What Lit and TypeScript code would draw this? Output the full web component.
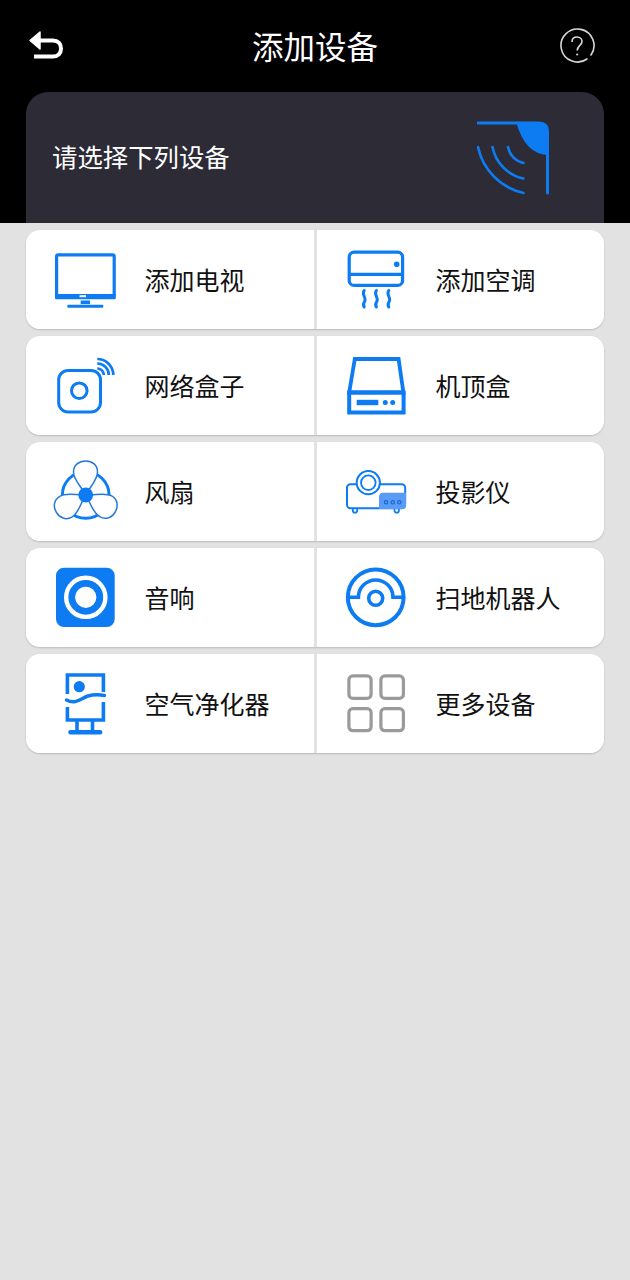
import { LitElement, html, svg, css } from "lit";
import { customElement } from "lit/decorators.js";

const B = "#0d7cf2";

const svgIcon = (body: unknown) => html`<svg class="icon" viewBox="0 0 70 70" fill="none" stroke="none">${body}</svg>`;

const blade = "M35.7 38C31 29 23.5 23 23.5 15C23.5 8 29 4 35.7 4C42.4 4 47.5 8 47.5 15C47.5 23 40.5 29 35.7 38Z";

const icons: Record<string, unknown> = {
  tv: svgIcon(svg`
    <rect x="6.6" y="9.9" width="57.6" height="42.5" rx="1.5" stroke=${B} stroke-width="3.2"/>
    <rect x="5" y="49" width="60.7" height="5.2" rx="1" fill=${B}/>
    <rect x="29.5" y="50.2" width="6.5" height="2" fill="#fff"/>
    <rect x="30.7" y="55.5" width="9.3" height="3.6" fill=${B}/>
    <rect x="17.3" y="59.8" width="36" height="3" rx="1" fill=${B}/>`),
  ac: svgIcon(svg`
    <rect x="8.2" y="7.2" width="53.4" height="33.2" rx="5" stroke=${B} stroke-width="3.2"/>
    <path d="M8 29.3H61.7" stroke=${B} stroke-width="3.2"/>
    <circle cx="55.7" cy="19.3" r="2.8" fill=${B}/>
    <g stroke=${B} stroke-width="3" stroke-linecap="round">
      <path d="M23.2 45.5C20 49.5 26 53 23.6 56.5C22.4 58.5 21.6 60 23.2 62"/>
      <path d="M35.4 45.5C32.2 49.5 38.2 53 35.8 56.5C34.6 58.5 33.8 60 35.4 62"/>
      <path d="M47.8 45.5C44.6 49.5 50.6 53 48.2 56.5C47 58.5 46.2 60 47.8 62"/>
    </g>`),
  box: svgIcon(svg`
    <rect x="8.7" y="19.4" width="41.8" height="41.6" rx="9.5" stroke=${B} stroke-width="3"/>
    <circle cx="29.3" cy="39.7" r="7.8" stroke=${B} stroke-width="3"/>
    <g stroke=${B} stroke-width="2.7">
      <path d="M47.3 17.5A6.5 6.5 0 0 1 53.8 24"/>
      <path d="M47.3 12.5A11.5 11.5 0 0 1 58.8 24"/>
      <path d="M47.3 8A16 16 0 0 1 63.3 24"/>
    </g>`),
  stb: svgIcon(svg`
    <path d="M13.8 8H57.6L62.4 41.5H8.2Z" stroke=${B} stroke-width="3.8" stroke-linejoin="miter"/>
    <rect x="8.2" y="41.5" width="54.4" height="20" stroke=${B} stroke-width="4"/>
    <rect x="15.7" y="48.8" width="21.6" height="5.4" fill=${B}/>
    <circle cx="44.3" cy="51.4" r="2.5" fill=${B}/>
    <circle cx="51.7" cy="51.4" r="2.5" fill=${B}/>`),
  fan: svgIcon(svg`
    <circle cx="35.7" cy="38" r="23.3" stroke=${B} stroke-width="3"/>
    <g fill="#fff" stroke="#2478d8" stroke-width="1.5">
      <path d=${blade}/>
      <path d=${blade} transform="rotate(120 35.7 38)"/>
      <path d=${blade} transform="rotate(240 35.7 38)"/>
    </g>
    <circle cx="35.7" cy="38" r="7.4" fill=${B}/>`),
  proj: svgIcon(svg`
    <rect x="6" y="27.2" width="58.2" height="24" rx="3.5" stroke=${B} stroke-width="2"/>
    <path d="M38 52V40Q38 35.7 42.3 35.7H65V48.5Q65 52 61.5 52Z" fill="#5b9bf8"/>
    <circle cx="27.3" cy="25.7" r="11.6" fill="#fff" stroke=${B} stroke-width="2"/>
    <circle cx="27.3" cy="25.7" r="7.3" stroke=${B} stroke-width="1.8"/>
    <g stroke="#1668c8" stroke-width="1.1">
      <circle cx="45" cy="45.3" r="1.7"/><circle cx="51.7" cy="45.3" r="1.7"/><circle cx="58.3" cy="45.3" r="1.7"/>
    </g>
    <g stroke=${B} stroke-width="1.8">
      <path d="M11.8 52V53.5A2.2 2.2 0 0 0 16.2 53.5V52"/>
      <path d="M53.5 52V53.5A2.2 2.2 0 0 0 57.9 53.5V52"/>
    </g>`),
  speaker: svgIcon(svg`
    <rect x="6" y="4.7" width="58.7" height="59.3" rx="8" fill=${B}/>
    <circle cx="35.8" cy="34.3" r="19.6" stroke="#fff" stroke-width="4.4"/>
    <circle cx="35.8" cy="34.3" r="10.6" fill="#fff"/>`),
  robot: svgIcon(svg`
    <circle cx="34.7" cy="34.3" r="27.9" stroke=${B} stroke-width="4"/>
    <path d="M7 34.3H17.4A17.3 17.3 0 0 1 52 34.3H62.4" stroke=${B} stroke-width="3.6"/>
    <circle cx="34.7" cy="35.3" r="7" stroke=${B} stroke-width="3.6"/>`),
  air: svgIcon(svg`
    <g stroke=${B} stroke-width="3.6">
      <path d="M17.4 25V6H53.4V23"/>
      <path d="M53.4 33V51H17.4V38"/>
      <path d="M27 51V62M42.5 51V62"/>
    </g>
    <circle cx="29.3" cy="17.7" r="5.6" fill=${B}/>
    <path d="M16.5 31C26 36 31 29 38 27C44 25.3 49 25.5 54.5 26.5" stroke=${B} stroke-width="3.4" stroke-linecap="round"/>
    <rect x="18.3" y="61" width="34" height="4.6" rx="2" fill=${B}/>`),
  more: svgIcon(svg`
    <g stroke="#9a9a9a" stroke-width="3.2">
      <rect x="7.9" y="6.9" width="22.2" height="22.5" rx="4"/>
      <rect x="39.9" y="6.9" width="22.5" height="22.5" rx="4"/>
      <rect x="7.9" y="39.6" width="22.2" height="22.1" rx="4"/>
      <rect x="39.9" y="39.6" width="22.5" height="22.1" rx="4"/>
    </g>`),
};

const rows: [string, string, string, string][] = [
  ["tv", "添加电视", "ac", "添加空调"],
  ["box", "网络盒子", "stb", "机顶盒"],
  ["fan", "风扇", "proj", "投影仪"],
  ["speaker", "音响", "robot", "扫地机器人"],
  ["air", "空气净化器", "more", "更多设备"],
];

@customElement("app-root")
export class AppRoot extends LitElement {
  static styles = css`
    :host {
      display: block;
      width: 630px;
      height: 1280px;
      background: #e2e2e2;
      font-family: "Noto Sans CJK SC", "Liberation Sans", sans-serif;
      overflow: hidden;
    }
    .top {
      background: #000;
      height: 223px;
      padding: 0 26px;
      box-sizing: border-box;
      display: flex;
      flex-direction: column;
    }
    .nav {
      height: 92px;
      flex: none;
      display: grid;
      grid-template-columns: 1fr auto 1fr;
      align-items: center;
      color: #fff;
    }
    .back { width: 40px; height: 34px; display: block; margin-left: 1px; }
    .title { font-size: 31.5px; line-height: 46px; margin-bottom: 2px; }
    .help { justify-self: end; width: 36px; height: 36px; display: block; margin-right: 9px; }
    .banner {
      flex: 1;
      background: #2c2b36;
      border-radius: 22px 22px 0 0;
      display: flex;
      align-items: center;
      justify-content: space-between;
      padding: 0 51px 0 27px;
      color: #fff;
      font-size: 25.4px;
    }
    .banner span { margin: 0 0 4px -1px; }
    .emit { width: 76px; height: 78px; display: block; margin-bottom: 4px; }
    .list {
      padding: 7px 26px 0;
      display: flex;
      flex-direction: column;
      gap: 7px;
    }
    .row {
      height: 99px;
      border-radius: 14px;
      overflow: hidden;
      display: grid;
      grid-template-columns: 288px 1fr;
      column-gap: 3px;
      box-shadow: 0 1px 2px rgba(0, 0, 0, 0.18);
    }
    .cell {
      background: #fff;
      display: flex;
      align-items: center;
      gap: 25px;
      padding-left: 24px;
      font-size: 25px;
      color: #111;
    }
    .cell span { margin: 0 0 2px -0.6px; }
    .icon { width: 70px; height: 70px; display: block; flex: none; }
  `;

  render() {
    return html`
      <div class="top">
        <div class="nav">
          <svg class="back" viewBox="0 0 40 34" fill="none">
            <path d="M3 11.5L13 3V20Z" fill="#fff" stroke="#fff" stroke-width="1.5" stroke-linejoin="round"/>
            <path d="M12 11.5H26C31 11.5 34 14.5 34 19.5C34 24.5 31 27.5 26 27.5H7" stroke="#fff" stroke-width="4"/>
          </svg>
          <div class="title">添加设备</div>
          <svg class="help" viewBox="0 0 36 36" fill="none">
            <path d="M28 31A16.5 16.5 0 1 1 32 27" stroke="#d8d8d8" stroke-width="1.6" stroke-linecap="round"/>
            <path d="M13 14C13 11 15 9 18 9C21 9 23 11 23 13.5C23 17 18.2 18 18.2 22.5" stroke="#d8d8d8" stroke-width="1.6"/>
            <circle cx="18.2" cy="26.5" r="1.1" fill="#d8d8d8"/>
          </svg>
        </div>
        <div class="banner">
          <span>请选择下列设备</span>
          <svg class="emit" viewBox="0 0 76 78" fill="none">
            <path d="M1 6H40" stroke=${B} stroke-width="3" stroke-linecap="round"/>
            <path d="M39 4.5H62Q72 4.5 72 14.5V38Q48 38 39 4.5Z" fill=${B}/>
            <path d="M70.5 30V76" stroke=${B} stroke-width="3" stroke-linecap="round"/>
            <g stroke=${B} stroke-width="2.6" stroke-linecap="round">
              <path d="M31 30A20 20 0 0 0 46.5 46"/>
              <path d="M15.5 30A40 40 0 0 0 46.5 61.5"/>
              <path d="M1 30A60 60 0 0 0 46.5 76"/>
            </g>
          </svg>
        </div>
      </div>
      <div class="list">
        ${rows.map(
          ([a, at, b, bt]) => html`
            <div class="row">
              <div class="cell">${icons[a]}<span>${at}</span></div>
              <div class="cell">${icons[b]}<span>${bt}</span></div>
            </div>
          `
        )}
      </div>
    `;
  }
}
